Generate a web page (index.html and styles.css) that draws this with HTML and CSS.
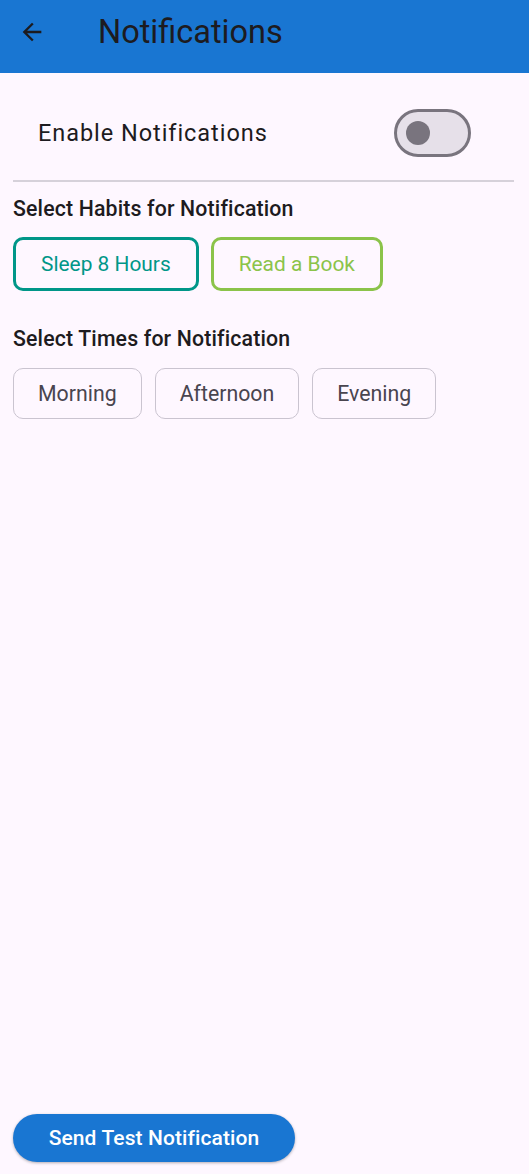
FILE: index.html
```html
<!DOCTYPE html>
<html>
<head>
<meta charset="utf-8">
<link rel="stylesheet" href="styles.css">
</head>
<body>
<div class="app">
  <header class="appbar">
    <svg class="back" width="28" height="28" viewBox="0 0 24 24"><path d="M20 11H7.83l5.59-5.59L12 4l-8 8 8 8 1.41-1.41L7.83 13H20v-2z" fill="#1c1b1f"/></svg>
    <h1 class="title">Notifications</h1>
  </header>
  <main class="content">
    <div class="tile">
      <span class="tile-label">Enable Notifications</span>
      <div class="switch"><div class="thumb"></div></div>
    </div>
    <hr class="divider">
    <h2 class="section">Select Habits for Notification</h2>
    <div class="chips">
      <div class="chip habit teal">Sleep 8 Hours</div>
      <div class="chip habit green">Read a Book</div>
    </div>
    <h2 class="section times-title">Select Times for Notification</h2>
    <div class="chips times">
      <div class="chip time">Morning</div>
      <div class="chip time">Afternoon</div>
      <div class="chip time">Evening</div>
    </div>
    <div class="spacer"></div>
    <div class="footer">
      <button class="send">Send Test Notification</button>
    </div>
  </main>
</div>
</body>
</html>
```
FILE: styles.css
```css
* { box-sizing: border-box; }
html, body { margin: 0; padding: 0; }
body {
  background: #fef7ff;
  font-family: Roboto, "Noto Sans", sans-serif;
  color: #1d1b20;
  width: 529px;
  height: 1174px;
  overflow: hidden;
}
.app { display: flex; flex-direction: column; height: 1174px; }
.appbar {
  height: 73px;
  background: #1976d2;
  display: flex;
  align-items: center;
  padding-left: 18px;
}
.back { width: 28px; height: 28px; margin-top: -10px; }
.title {
  margin: -10px 0 0 52px;
  font-size: 32.5px;
  font-weight: 400;
  color: #1d1b20;
}
.content {
  flex: 1;
  display: flex;
  flex-direction: column;
  padding: 0 15px 12px 13px;
}
.tile {
  height: 107px;
  display: flex;
  align-items: center;
  justify-content: space-between;
  padding: 12px 43px 0 25px;
}
.tile-label { font-size: 23.5px; letter-spacing: 0.95px; color: #1d1b20; }
.switch {
  width: 77px;
  height: 48px;
  border: 3px solid #79747e;
  border-radius: 24px;
  background: #e6e0e9;
  display: flex;
  align-items: center;
  padding-left: 9px;
}
.thumb { width: 24px; height: 24px; border-radius: 50%; background: #79747e; }
.divider { margin: 0; border: none; border-top: 2px solid #d6d1da; }
.section {
  margin: 15px 0 0 0;
  font-size: 21.3px;
  font-weight: 500;
  letter-spacing: 0.15px;
  color: #1d1b20;
  line-height: 24px;
}
.times-title { margin-top: 36px; }
.chips { display: flex; gap: 12px; margin-top: 16px; }
.times { gap: 13px; margin-top: 17px; }
.chip {
  display: flex; align-items: center; justify-content: center;
  font-size: 21.3px;
  border-radius: 10px;
  background: #fef7ff;
}
.habit { height: 54px; border: 3px solid; padding: 0 25px; font-size: 20.9px; }
.teal { border-color: #009688; color: #009688; }
.green { border-color: #8bc34a; color: #8bc34a; }
.time { height: 51px; border: 1.5px solid #cac4d0; color: #49454f; padding: 0 24px; }
.spacer { flex: 1; }
.footer { display: flex; }
.send {
  height: 48px;
  width: 282px;
  border: none;
  border-radius: 24px;
  background: #1976d2;
  color: #fff;
  font-family: Roboto, sans-serif;
  font-size: 21px;
  font-weight: 500;
  letter-spacing: 0.1px;
  box-shadow: 0 1px 3px rgba(0,0,0,0.3);
}
```
